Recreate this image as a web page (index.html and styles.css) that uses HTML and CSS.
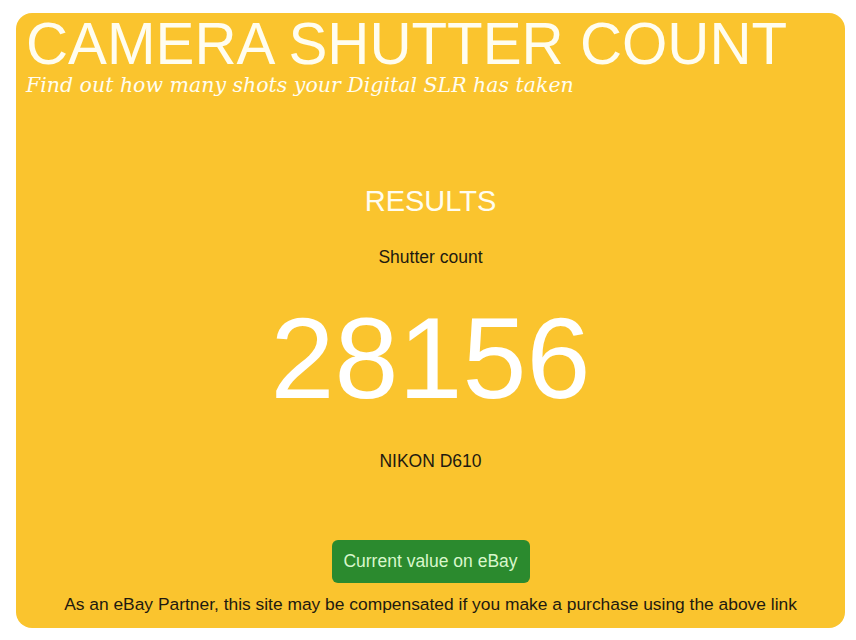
FILE: index.html
```html
<!DOCTYPE html>
<html lang="en">
<head>
    <meta charset="UTF-8">
    <meta name="viewport" content="width=device-width, initial-scale=1.0">
    <title>Camera Shutter Count</title>
    <link rel="stylesheet" href="styles.css">
</head>
<body>
<div class="card">
    <!-- Header -->
    <header class="header">
        <h1>CAMERA SHUTTER COUNT</h1>
        <p class="tagline">Find out how many shots your Digital SLR has taken</p>
    </header>

    <!-- Results -->
    <div class="results">
        <h2>RESULTS</h2>
        <p class="label">Shutter count</p>
        <div class="count">28156</div>
        <p class="model">NIKON D610</p>
    </div>

    <div class="ebay">
        <button class="ebay-btn">Current value on eBay</button>
        <p class="disclaimer">As an eBay Partner, this site may be compensated if you make a purchase using the above link</p>
    </div>
</div>
</body>
</html>
```

FILE: styles.css
```css
/* General Styles */
body {
    margin: 0;
    background: #ffffff;
    font-family: "Liberation Sans", Arial, sans-serif;
    color: #1e1a10;
}

/* Card */
.card {
    margin: 13px 11px 12px 16px;
    height: 615px;
    background: #fac42e;
    border-radius: 16px;
    display: flex;
    flex-direction: column;
    box-sizing: border-box;
    padding: 2px 10px 0;
}

/* Header */
.header h1 {
    margin: 0;
    font-size: 58.3px;
    font-weight: normal;
    line-height: 1;
    color: #fffdf0;
}

.tagline {
    margin: 1px 0 0;
    font-family: "DejaVu Serif", Georgia, serif;
    font-style: italic;
    font-size: 20.5px;
    line-height: 1.1;
    color: #fffdf0;
}

/* Results */
.results {
    text-align: center;
    margin-top: 88px;
}

.results h2 {
    margin: 0;
    font-size: 29px;
    font-weight: normal;
    color: #fffdf0;
}

.label, .model {
    margin: 0;
    font-size: 17.5px;
}

.label {
    margin-top: 29px;
}

.count {
    font-size: 115px;
    line-height: 1;
    color: #ffffff;
    margin-top: 33px;
}

.model {
    margin-top: 35px;
}

/* eBay */
.ebay {
    margin-top: auto;
    text-align: center;
    padding-bottom: 13px;
}

.ebay-btn {
    background: #2b8a2e;
    color: #d9f7cc;
    font-family: "Liberation Sans", Arial, sans-serif;
    font-size: 17.5px;
    white-space: nowrap;
    border: none;
    border-radius: 6px;
    padding: 0;
    height: 43px;
    width: 198px;
    cursor: pointer;
}

.disclaimer {
    margin: 11px 0 0;
    font-size: 17.4px;
}
```
